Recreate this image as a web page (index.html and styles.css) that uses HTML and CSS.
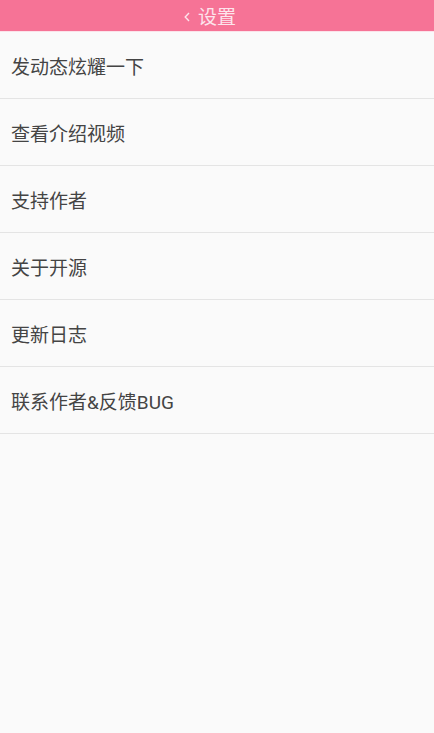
FILE: index.html
```html
<!DOCTYPE html>
<html lang="zh">
<head>
    <meta charset="UTF-8" />
    <meta name="viewport" content="width=device-width, initial-scale=1" />
    <title>设置</title>
    <link rel="stylesheet" href="styles.css">
</head>
<body>

    <!-- 顶部标题栏 -->
    <div class="titlebar">
        <svg class="back" width="6" height="10" viewBox="0 0 6 10">
            <path d="M5 1 L1.2 5 L5 9" fill="none" stroke="#fde4ec" stroke-width="1.4" />
        </svg>
        <span class="title">设置</span>
    </div>

    <!-- 设置列表 -->
    <ul class="menu">
        <li>发动态炫耀一下</li>
        <li>查看介绍视频</li>
        <li>支持作者</li>
        <li>关于开源</li>
        <li>更新日志</li>
        <li>联系作者&amp;反馈BUG</li>
    </ul>

</body>
</html>
```

FILE: styles.css
```css
body {
    font-family: Roboto, "Noto Sans CJK SC", sans-serif;
    background-color: #fafafa;
    margin: 0;
    padding: 0;
    color: #444;
}
.titlebar {
    height: 32px;
    background-color: #f67396;
    color: #fde4ec;
    display: flex;
    align-items: center;
    justify-content: center;
    font-size: 19px;
    border-bottom: 1px solid #fbe3ea;
    box-sizing: border-box;
}
.back {
    margin-right: 8px;
    margin-top: 2px;
}
.title {
    padding-right: 14px;
}
.menu {
    list-style: none;
    margin: 0;
    padding: 0;
}
.menu li {
    height: 66px;
    display: flex;
    align-items: center;
    padding-left: 11px;
    font-size: 19px;
    border-bottom: 1px solid #e4e4e4;
}
```
